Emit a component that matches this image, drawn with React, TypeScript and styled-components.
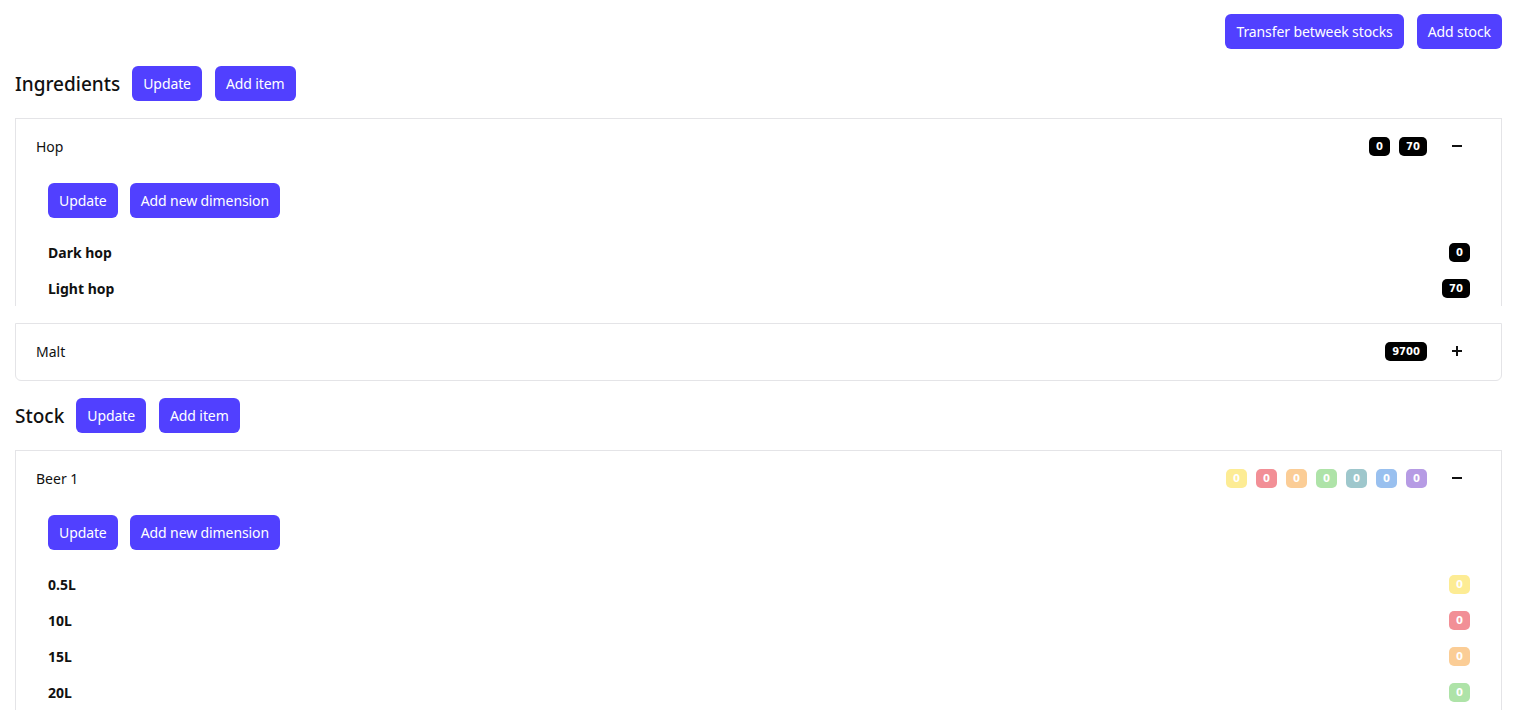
import React from "react";
import styled, { createGlobalStyle } from "styled-components";

const Global = createGlobalStyle`
  html, body { margin: 0; padding: 0; background: #fff; }
  body { font-family: "Noto Sans", "Open Sans", sans-serif; color: #111; }
  * { box-sizing: border-box; }
`;

const Page = styled.div`
  padding: 14px 14px 0 15px;
  display: flex;
  flex-direction: column;
`;

const TopBar = styled.div`
  display: flex;
  justify-content: flex-end;
  gap: 13px;
  margin-bottom: 17px;
`;

const Button = styled.button`
  height: 35px;
  padding: 0 11px;
  border: none;
  border-radius: 6px;
  background: #5140ff;
  color: #fff;
  font-family: "Noto Sans", "Open Sans", sans-serif;
  font-size: 14px;
  letter-spacing: -0.1px;
  line-height: 35px;
  cursor: pointer;
  white-space: nowrap;
`;

const SectionHeader = styled.div`
  display: flex;
  align-items: center;
  gap: 13px;
  margin-bottom: 17px;
`;

const SectionTitle = styled.h2`
  margin: 0 -1px 0 0;
  font-size: 19px;
  font-weight: 500;
  color: #111;
`;

const Accordion = styled.div<{ $gapAfter?: number }>`
  display: flex;
  flex-direction: column;
  gap: 17px;
  margin-bottom: ${(p) => p.$gapAfter ?? 0}px;
`;

const Item = styled.div<{ $open?: boolean }>`
  border: 1px solid #e4e4e7;
  border-bottom: ${(p) => (p.$open ? "none" : "1px solid #e4e4e7")};
  border-radius: ${(p) => (p.$open ? "0" : "0 0 6px 6px")};
`;

const ItemHeader = styled.div`
  height: 56px;
  display: flex;
  align-items: center;
  padding: 0 20px 2px;
  font-size: 14px;
`;

const ItemName = styled.span`
  flex: 1;
`;

const Badges = styled.div`
  display: flex;
  gap: 9px;
`;

const Badge = styled.span<{ $bg: string }>`
  display: inline-flex;
  align-items: center;
  justify-content: center;
  min-width: 21px;
  height: 19px;
  padding: 0 7px;
  border-radius: 5px;
  background: ${(p) => p.$bg};
  color: #fff;
  font-family: "DejaVu Sans", Verdana, sans-serif;
  font-size: 10px;
  font-weight: 700;
`;

const IconBox = styled.span`
  width: 48px;
  margin-left: 6px;
  display: flex;
  justify-content: center;
  align-items: center;
`;

const Content = styled.div`
  padding: 8px 31px 0 32px;
`;

const ContentButtons = styled.div`
  display: flex;
  gap: 12px;
  margin-bottom: 16px;
`;

const DimRow = styled.div`
  height: 36px;
  display: flex;
  align-items: center;
  justify-content: space-between;
  font-size: 14px;
  font-weight: 700;
`;

const Minus = () => (
  <svg width="12" height="12" viewBox="0 0 12 12">
    <path d="M1 6h10" stroke="#111" strokeWidth="2" />
  </svg>
);
const Plus = () => (
  <svg width="12" height="12" viewBox="0 0 12 12">
    <path d="M1 6h10M6 1v10" stroke="#111" strokeWidth="2" />
  </svg>
);

const colors = ["#fdec94", "#f28f96", "#fbcd96", "#aee3a8", "#9ec7cc", "#99c0ef", "#b69be4"];

type Dim = { name: string; value: string; color: string };

const AccItem: React.FC<{ name: string; open?: boolean; badges: { v: string; c: string }[]; dims?: Dim[] }> = ({
  name,
  open,
  badges,
  dims,
}) => (
  <Item $open={open}>
    <ItemHeader>
      <ItemName>{name}</ItemName>
      <Badges>
        {badges.map((b, i) => (
          <Badge key={i} $bg={b.c}>
            {b.v}
          </Badge>
        ))}
      </Badges>
      <IconBox>{open ? <Minus /> : <Plus />}</IconBox>
    </ItemHeader>
    {open && dims && (
      <Content>
        <ContentButtons>
          <Button>Update</Button>
          <Button>Add new dimension</Button>
        </ContentButtons>
        {dims.map((d) => (
          <DimRow key={d.name}>
            <span>{d.name}</span>
            <Badge $bg={d.color}>{d.value}</Badge>
          </DimRow>
        ))}
      </Content>
    )}
  </Item>
);

export default function App() {
  const beerDims: Dim[] = ["0.5L", "10L", "15L", "20L"].map((n, i) => ({
    name: n,
    value: "0",
    color: colors[i],
  }));
  return (
    <>
      <Global />
      <Page>
        <TopBar>
          <Button>Transfer betweek stocks</Button>
          <Button>Add stock</Button>
        </TopBar>
        <SectionHeader>
          <SectionTitle>Ingredients</SectionTitle>
          <Button>Update</Button>
          <Button>Add item</Button>
        </SectionHeader>
        <Accordion $gapAfter={17}>
          <AccItem
            name="Hop"
            open
            badges={[
              { v: "0", c: "#000" },
              { v: "70", c: "#000" },
            ]}
            dims={[
              { name: "Dark hop", value: "0", color: "#000" },
              { name: "Light hop", value: "70", color: "#000" },
            ]}
          />
          <AccItem name="Malt" badges={[{ v: "9700", c: "#000" }]} />
        </Accordion>
        <SectionHeader>
          <SectionTitle>Stock</SectionTitle>
          <Button>Update</Button>
          <Button>Add item</Button>
        </SectionHeader>
        <Accordion>
          <AccItem name="Beer 1" open badges={colors.map((c) => ({ v: "0", c }))} dims={beerDims} />
        </Accordion>
      </Page>
    </>
  );
}
